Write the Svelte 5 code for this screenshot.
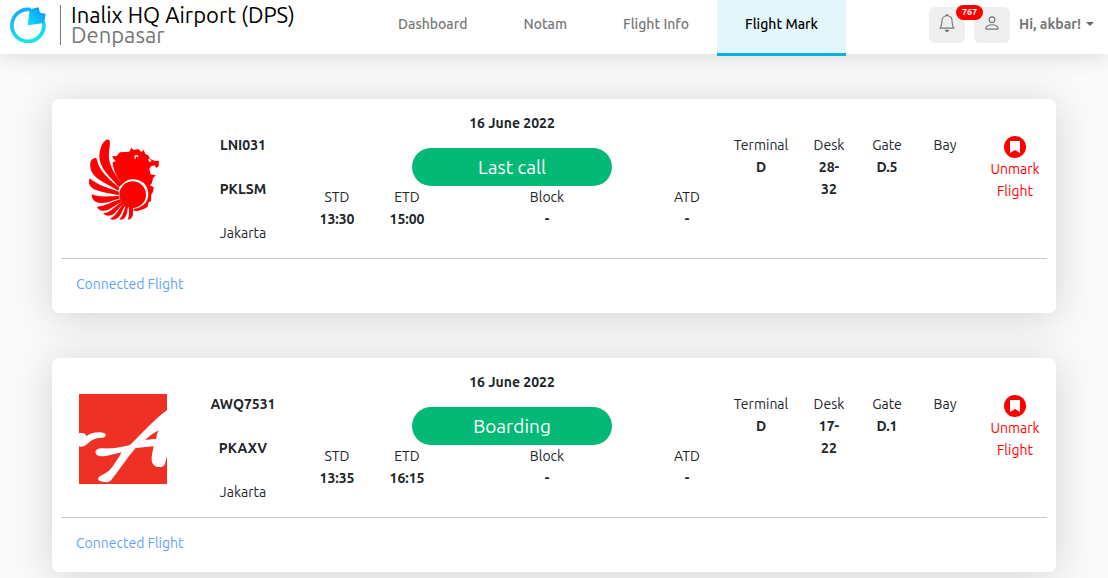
<script lang="ts">
	const links = [
		{ label: 'Dashboard', href: '#dashboard', active: false },
		{ label: 'Notam', href: '#notam', active: false },
		{ label: 'Flight Info', href: '#flight-info', active: false },
		{ label: 'Flight Mark', href: '#flight-mark', active: true },
	];

	let notifications = $state(767);

	let flights = $state([
		{
			airline: 'lion', code: 'LNI031', reg: 'PKLSM', city: 'Jakarta',
			date: '16 June 2022', status: 'Last call',
			std: '13:30', etd: '15:00', block: '-', atd: '-',
			terminal: 'D', desk: '28-32', gate: 'D.5', bay: '',
		},
		{
			airline: 'airasia', code: 'AWQ7531', reg: 'PKAXV', city: 'Jakarta',
			date: '16 June 2022', status: 'Boarding',
			std: '13:35', etd: '16:15', block: '-', atd: '-',
			terminal: 'D', desk: '17-22', gate: 'D.1', bay: '',
		},
	]);

	function unmark(code: string) {
		flights = flights.filter((f) => f.code !== code);
	}
</script>

<header class="topbar">
	<a class="brand" href="#home">
		<svg class="brand-logo" viewBox="0 0 108 108" aria-hidden="true">
			<defs>
				<linearGradient id="ring" x1="0" y1="0" x2="0.3" y2="1">
					<stop offset="0" stop-color="#1ca4fb" />
					<stop offset="1" stop-color="#10e4f0" />
				</linearGradient>
				<linearGradient id="wedge" x1="1" y1="0" x2="0" y2="1">
					<stop offset="0" stop-color="#0a8cf8" />
					<stop offset="1" stop-color="#14e0f4" />
				</linearGradient>
			</defs>
			<path d="M62 8A48 48 0 1 0 101 47" fill="none" stroke="url(#ring)" stroke-width="11" />
			<path d="M53 55L59 7L86 1L90 17L107 20L103 48Z" fill="url(#wedge)" />
		</svg>
		<span class="brand-text">
			<span class="brand-name">Inalix HQ Airport (DPS)</span>
			<span class="brand-city">Denpasar</span>
		</span>
	</a>

	<nav class="menu" aria-label="Main">
		{#each links as link}
			<a href={link.href} class:active={link.active}>{link.label}</a>
		{/each}
	</nav>

	<div class="tools">
		<button class="tool" aria-label="Notifications">
			<svg viewBox="0 0 16 16" aria-hidden="true">
				<path d="M8 16a2 2 0 0 0 2-2H6a2 2 0 0 0 2 2zM8 1.918l-.797.161A4.002 4.002 0 0 0 4 6c0 .628-.134 2.197-.459 3.742-.16.767-.376 1.566-.663 2.258h10.244c-.287-.692-.502-1.49-.663-2.258C12.134 8.197 12 6.628 12 6a4.002 4.002 0 0 0-3.203-3.92L8 1.917zM14.22 12c.223.447.481.801.78 1H1c.299-.199.557-.553.78-1C2.68 10.2 3 6.88 3 6c0-2.42 1.72-4.44 4.005-4.901a1 1 0 1 1 1.99 0A5.002 5.002 0 0 1 13 6c0 .88.32 4.2 1.22 6z" />
			</svg>
			<span class="badge">{notifications}</span>
		</button>
		<button class="tool" aria-label="Profile">
			<svg viewBox="0 0 16 16" aria-hidden="true">
				<path d="M8 8a3 3 0 1 0 0-6 3 3 0 0 0 0 6zm2-3a2 2 0 1 1-4 0 2 2 0 0 1 4 0zm4 8c0 1-1 1-1 1H3s-1 0-1-1 1-4 6-4 6 3 6 4zm-1-.004c-.001-.246-.154-.986-.832-1.664C11.516 10.68 10.289 10 8 10c-2.29 0-3.516.68-4.168 1.332-.678.678-.83 1.418-.832 1.664h10z" />
			</svg>
		</button>
		<button class="user">Hi, akbar!<span class="caret"></span></button>
	</div>
</header>

<main class="list">
	{#each flights as flight (flight.code)}
		<article class="card">
			<div class="row">
				<div class="logo">
					{#if flight.airline === 'lion'}
						<svg viewBox="27 30 264 270" role="img" aria-label="Lion Air">
							<!-- wing -->
							<g fill="#f00" transform="translate(42 27)">
								<path d="M75 17C60 14 49 37 46 62C45 92 62 112 82 134L105 160L115 150C92 122 79 98 75 74C73 52 80 34 77 20Z" />
								<path d="M37 72C24 70 17 82 19 100C22 124 46 140 72 152L103 170L106 162C82 142 54 118 44 94Z" />
								<path d="M17 133C11 149 18 160 34 167C55 176 82 178 104 184L105 173C80 164 42 155 17 133Z" />
								<path d="M23 181C23 199 36 208 54 207C74 206 90 197 107 194L104 186C76 186 46 191 23 181Z" />
								<path d="M39 218C43 230 57 234 73 227C88 220 98 210 113 203L108 196C84 202 62 218 39 218Z" />
								<path d="M58 238C66 249 82 247 92 237C103 227 107 218 118 210L113 204C97 213 80 236 58 238Z" />
								<path d="M78 254C89 262 102 254 109 243C117 231 117 222 125 214L118 210C105 222 96 248 78 254Z" />
								<path d="M106 256C117 260 124 252 128 240C131 230 130 224 133 217L125 214C121 229 116 248 106 256Z" />
								<path d="M131 257C141 257 146 249 147 240L147 220L134 218C135 231 137 246 131 257Z" />
							</g>
							<!-- head and disc -->
							<g fill="#f00">
								<path d="M130 101L127 93L139 94L150 82L178 80L184 68L191 75L205 72L214 81L221 75L226 86L236 92L240 102L246 104L255 108L267 107L266 124L259 129L253 121L243 124L238 132L242 148L257 151L249 160L246 174L240 181L251 187L249 201L244 208L243 229L236 231L233 245L222 252L203 258L191 257L191 251C218 249 235 231 235 207C235 179 214 163 189 163C174 163 164 169 157 178C139 156 129 133 128 112L137 108Z" />
								<circle cx="188" cy="209" r="40" />
							</g>
							<path d="M194 101L193 93Q200 87 205 94L204 98L200 94Q195 94 198 103Z" fill="#fff" />
							<path d="M234 103L238 111L245 108L238 101Z" fill="#fff" />
						</svg>
					{:else}
						<svg viewBox="3 3 264 270" role="img" aria-label="AirAsia">
							<rect x="3" y="3" width="264" height="270" fill="#ef3125" />
							<g fill="#fff">
								<path d="M3 121C14 118 25 121 25 130C38 119 56 115 75 119C87 122 85 132 74 134C50 133 40 142 24 156C17 161 8 162 3 160Z" />
								<path fill-rule="evenodd" d="M267 52C237 73 203 109 177 135C165 147 158 157 147 158C125 163 101 167 75 166C58 165 51 172 53 181C56 191 70 191 87 188L131 178C121 195 111 212 101 224C91 236 80 242 68 248C58 253 58 261 66 264C77 268 92 270 99 262C119 238 148 193 173 165L227 160C225 172 220 188 221 201C222 214 231 222 242 222C252 222 258 220 261 212L267 188ZM242 112C227 120 211 131 202 141L235 137C236 127 238 118 242 112Z" />
							</g>
						</svg>
					{/if}
				</div>

				<div class="ident">
					<strong>{flight.code}</strong>
					<strong>{flight.reg}</strong>
					<span>{flight.city}</span>
				</div>

				<div class="schedule">
					<strong class="date">{flight.date}</strong>
					<span class="status">{flight.status}</span>
					<dl class="times">
						<div><dt>STD</dt><dd>{flight.std}</dd></div>
						<div><dt>ETD</dt><dd>{flight.etd}</dd></div>
						<div><dt>Block</dt><dd>{flight.block}</dd></div>
						<div><dt>ATD</dt><dd>{flight.atd}</dd></div>
					</dl>
				</div>

				<dl class="place">
					<div><dt>Terminal</dt><dd>{flight.terminal}</dd></div>
					<div><dt>Desk</dt><dd>{flight.desk}</dd></div>
					<div><dt>Gate</dt><dd>{flight.gate}</dd></div>
					<div><dt>Bay</dt><dd>{flight.bay}</dd></div>
				</dl>

				<button class="unmark" onclick={() => unmark(flight.code)}>
					<svg viewBox="0 0 22 22" aria-hidden="true">
						<circle cx="11" cy="11" r="11" fill="#f00" />
						<path d="M6 5H16V17L11 14L6 17Z" fill="#fff" />
					</svg>
					Unmark Flight
				</button>
			</div>
			<div class="foot">
				<a href="#connected">Connected Flight</a>
			</div>
		</article>
	{/each}
</main>

<style>
	:global(body) {
		background: #fafafa;
		color: #212529;
		font-family: Ubuntu, 'Noto Sans', 'Open Sans', sans-serif;
		font-size: 14px;
		line-height: 22px;
	}
	a {
		text-decoration: none;
	}
	button {
		border: 0;
		padding: 0;
		font: inherit;
		cursor: pointer;
	}
	dl, dd {
		margin: 0;
	}
	dd {
		font-weight: 700;
	}

	/* top bar */
	.topbar {
		position: relative;
		display: flex;
		justify-content: space-between;
		align-items: flex-start;
		height: 54px;
		padding: 0 14px 0 10px;
		background: #fff;
		box-shadow: 0 0 24px rgba(0,0,0,0.16);
	}
	.brand {
		display: flex;
		align-items: center;
		padding-top: 5px;
	}
	.brand-logo {
		width: 36px;
		height: 36px;
	}
	.brand-text {
		display: flex;
		flex-direction: column;
		margin-left: 14px;
		padding-left: 10px;
		border-left: 1px solid #777;
		font-size: 22px;
		line-height: 20px;
		white-space: nowrap;
	}
	.brand-name {
		color: #000;
	}
	.brand-city {
		color: #777;
	}
	.menu {
		display: flex;
		margin-right: 8px;
	}
	.menu a {
		padding: 13px 28px 18px;
		border-bottom: 3px solid transparent;
		color: #777;
		font-weight: 500;
		white-space: nowrap;
	}
	.menu a.active {
		background: #e3f6fb;
		border-color: #03b3e0;
		color: #000;
	}
	.tools {
		display: flex;
		align-items: center;
		gap: 9px;
		padding-top: 7px;
	}
	.tool {
		position: relative;
		display: flex;
		align-items: center;
		justify-content: center;
		width: 36px;
		height: 36px;
		border-radius: 6px;
		background: #efefef;
	}
	.tool svg {
		width: 18px;
		height: 18px;
		margin-bottom: 4px;
		fill: #777;
	}
	.badge {
		position: absolute;
		top: -2px;
		left: 27px;
		z-index: 1;
		width: 27px;
		border-radius: 8px;
		background: #f00;
		color: #fff;
		font-size: 9px;
		font-weight: 700;
		line-height: 15px;
	}
	.user {
		display: flex;
		align-items: center;
		gap: 5px;
		padding-bottom: 2px;
		background: none;
		color: #777;
		font-weight: 700;
		white-space: nowrap;
	}
	.caret {
		border: 4px solid transparent;
		border-top-color: #666;
		border-bottom: 0;
	}

	/* flight cards */
	.list {
		display: flex;
		flex-direction: column;
		gap: 45px;
		padding: 45px 52px 6px;
	}
	.card {
		border-radius: 7px;
		background: #fff;
		box-shadow: 0 4px 40px rgba(0,0,0,0.16);
	}
	.row {
		display: grid;
		grid-template-columns: 142fr 98fr 430fr 252fr 82fr;
		padding: 13px 0 14px;
		text-align: center;
	}
	.logo {
		padding-top: 23px;
	}
	.logo svg {
		display: block;
		width: 88px;
		height: 90px;
		margin: 0 auto;
	}
	.ident {
		display: flex;
		flex-direction: column;
		gap: 22px;
		padding-top: 22px;
	}
	.schedule {
		display: flex;
		flex-direction: column;
		align-items: center;
		padding-left: 10px;
	}
	.status {
		width: 200px;
		margin-top: 14px;
		border-radius: 20px;
		background: #04b976;
		color: #fff;
		font-size: 19px;
		line-height: 38px;
	}
	.times {
		display: grid;
		grid-template-columns: 1fr 1fr 3fr 1fr;
		align-self: stretch;
	}
	.place {
		display: grid;
		grid-template-columns: 78fr 58fr 58fr 58fr;
		padding-top: 22px;
	}
	.place dd {
		padding: 0 12px;
	}
	.unmark {
		align-self: start;
		padding: 24px 12px 0;
		background: none;
		color: #f00;
	}
	.unmark svg {
		display: block;
		width: 22px;
		height: 22px;
		margin: 0 auto;
	}
	.foot {
		margin: 0 9px;
		padding: 14px 15px 18px;
		border-top: 1px solid #c8c8c8;
	}
	.foot a {
		color: #5fa4fb;
	}
</style>
